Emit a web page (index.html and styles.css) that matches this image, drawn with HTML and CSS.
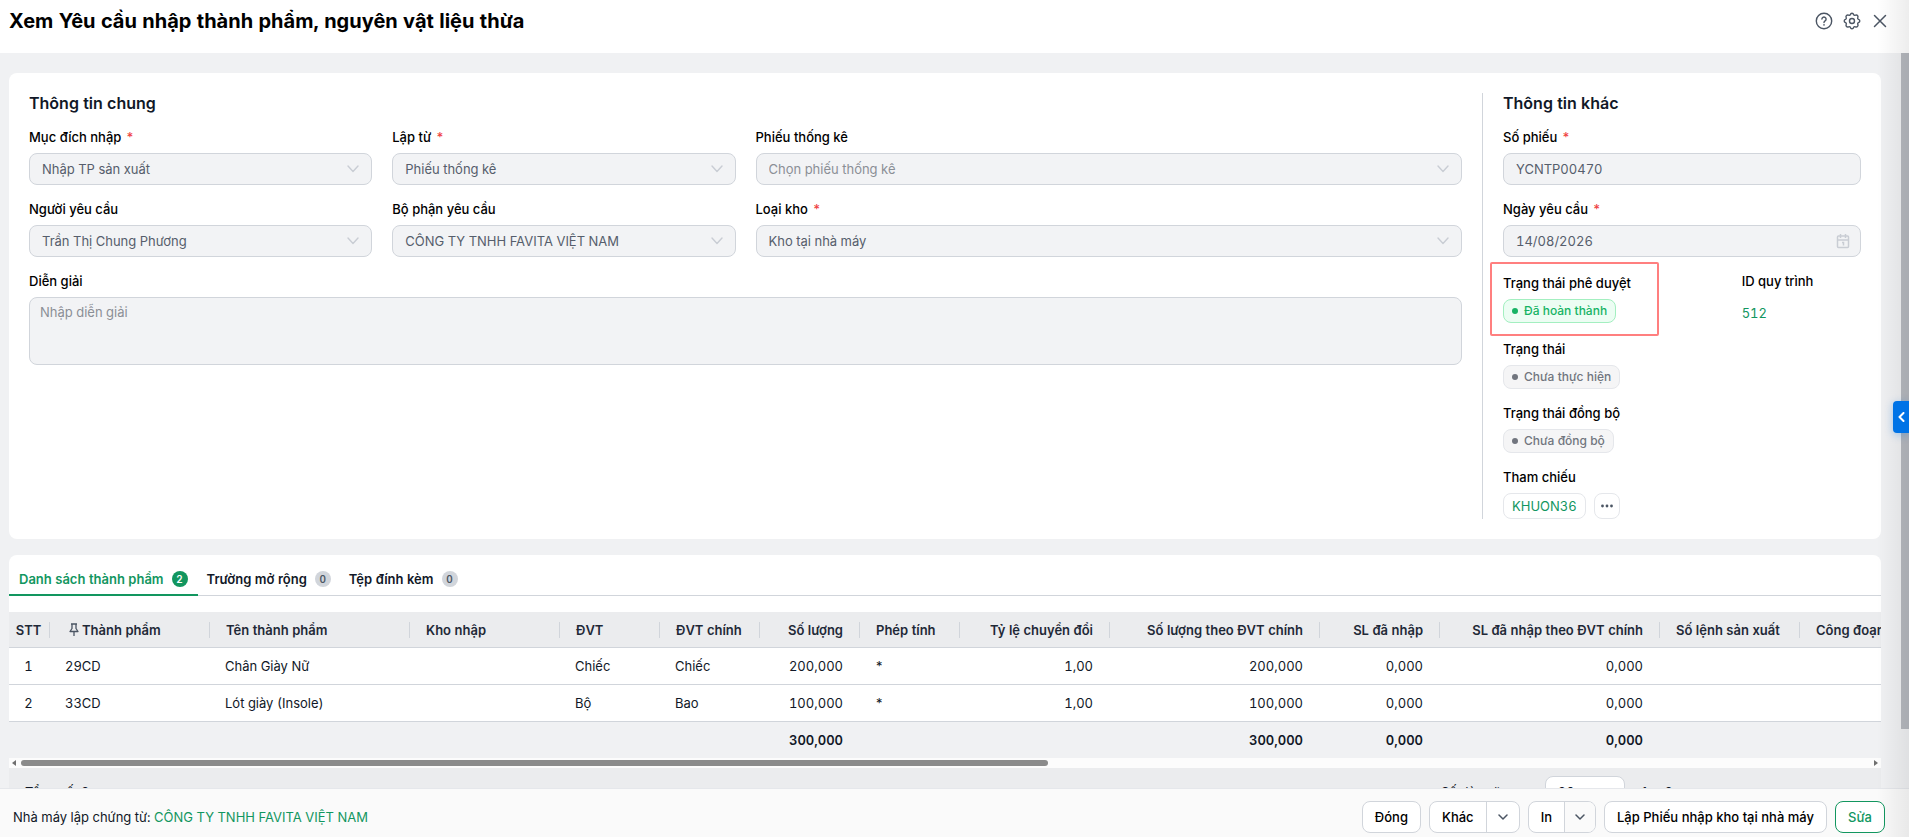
FILE: index.html
```html
<!DOCTYPE html>
<html lang="vi">
<head>
  <meta charset="UTF-8">
  <meta name="viewport" content="width=device-width, initial-scale=1.0">
  <title>Xem Yêu cầu nhập thành phẩm, nguyên vật liệu thừa</title>
  <link rel="stylesheet" href="styles.css">
</head>
<body>
  <!-- shared icons -->
  <svg class="sprite" aria-hidden="true">
    <symbol id="chevron" viewBox="0 0 12 8">
      <path d="M1 1l5 5.5L11 1" fill="none" stroke="currentColor" stroke-width="1.4" stroke-linecap="round" stroke-linejoin="round"/>
    </symbol>
    <symbol id="caret" viewBox="0 0 10 7">
      <path d="M1 1l4 4 4-4" fill="none" stroke="currentColor" stroke-width="1.5" stroke-linecap="round" stroke-linejoin="round"/>
    </symbol>
  </svg>

  <header class="header">
    <h1>Xem Yêu cầu nhập thành phẩm, nguyên vật liệu thừa</h1>
    <div class="header-actions">
      <button class="icon-btn" type="button" aria-label="Trợ giúp">
        <svg width="18" height="18" viewBox="0 0 18 18" fill="none" stroke="currentColor" stroke-width="1.4" stroke-linecap="round">
          <circle cx="9" cy="9" r="7.7"/>
          <path d="M6.9 7.1a2.1 2.1 0 1 1 3.2 1.8c-.8.5-1.1.8-1.1 1.6"/>
          <path d="M9 12.9v.1" stroke-width="1.6"/>
        </svg>
      </button>
      <button class="icon-btn" type="button" aria-label="Thiết lập">
        <svg width="18" height="18" viewBox="0 0 18 18" fill="none" stroke="currentColor" stroke-width="1.4" stroke-linejoin="round">
          <circle cx="9" cy="9" r="2.5"/>
          <path d="M7.4 2.6Q7.7 1.2 9 1.2T10.6 2.6Q11.2 3.7 12.4 3.2Q13.7 2.6 14.5 3.5T14.8 5.6Q14.3 6.8 15.4 7.4Q16.8 7.7 16.8 9T15.4 10.6Q14.3 11.2 14.8 12.4Q15.4 13.7 14.5 14.5T12.4 14.8Q11.2 14.3 10.6 15.4Q10.3 16.8 9 16.8T7.4 15.4Q6.8 14.3 5.6 14.8Q4.3 15.4 3.5 14.5T3.2 12.4Q3.7 11.2 2.6 10.6Q1.2 10.3 1.2 9T2.6 7.4Q3.7 6.8 3.2 5.6Q2.6 4.3 3.5 3.5T5.6 3.2Q6.8 3.7 7.4 2.6Z"/>
        </svg>
      </button>
      <button class="icon-btn" type="button" aria-label="Thoát">
        <svg width="18" height="18" viewBox="0 0 18 18" fill="none" stroke="currentColor" stroke-width="1.5" stroke-linecap="round">
          <path d="M3.5 3.5l11 11M14.5 3.5l-11 11"/>
        </svg>
      </button>
    </div>
  </header>

  <div class="content">
    <main class="main">
      <form class="card info">
        <section class="info-main">
          <h2>Thông tin chung</h2>
          <div class="fields">
            <div class="field">
              <label for="purpose">Mục đích nhập <span class="req">*</span></label>
              <div class="control">
                <select id="purpose" disabled><option>Nhập TP sản xuất</option></select>
                <svg class="arrow"><use href="#chevron"/></svg>
              </div>
            </div>
            <div class="field">
              <label for="source">Lập từ <span class="req">*</span></label>
              <div class="control">
                <select id="source" disabled><option>Phiếu thống kê</option></select>
                <svg class="arrow"><use href="#chevron"/></svg>
              </div>
            </div>
            <div class="field wide">
              <label for="sheet">Phiếu thống kê</label>
              <div class="control">
                <select id="sheet" class="empty" disabled><option>Chọn phiếu thống kê</option></select>
                <svg class="arrow"><use href="#chevron"/></svg>
              </div>
            </div>
            <div class="field">
              <label for="requester">Người yêu cầu</label>
              <div class="control">
                <select id="requester" disabled><option>Trần Thị Chung Phương</option></select>
                <svg class="arrow"><use href="#chevron"/></svg>
              </div>
            </div>
            <div class="field">
              <label for="department">Bộ phận yêu cầu</label>
              <div class="control">
                <select id="department" disabled><option>CÔNG TY TNHH FAVITA VIỆT NAM</option></select>
                <svg class="arrow"><use href="#chevron"/></svg>
              </div>
            </div>
            <div class="field wide">
              <label for="stock">Loại kho <span class="req">*</span></label>
              <div class="control">
                <select id="stock" disabled><option>Kho tại nhà máy</option></select>
                <svg class="arrow"><use href="#chevron"/></svg>
              </div>
            </div>
            <div class="field full">
              <label for="note">Diễn giải</label>
              <textarea id="note" placeholder="Nhập diễn giải" disabled></textarea>
            </div>
          </div>
        </section>

        <section class="info-side">
          <h2>Thông tin khác</h2>
          <div class="fields">
            <div class="field full">
              <label for="code">Số phiếu <span class="req">*</span></label>
              <input id="code" type="text" value="YCNTP00470" disabled>
            </div>
            <div class="field full">
              <label for="date">Ngày yêu cầu <span class="req">*</span></label>
              <div class="control">
                <input id="date" type="text" value="14/08/2026" disabled>
                <svg class="calendar" viewBox="0 0 14 16" fill="none" stroke="currentColor" stroke-width="1.5">
                  <rect x="1.5" y="3" width="11" height="11.5" rx="1"/>
                  <path d="M1.5 7h11M4.5 1v4M9.5 1v4M6 9.5h1.5v3"/>
                </svg>
              </div>
            </div>
          </div>
          <div class="status-row">
            <div class="status marked">
              <span class="label">Trạng thái phê duyệt</span>
              <span class="badge done">Đã hoàn thành</span>
            </div>
            <div class="process">
              <span class="label">ID quy trình</span>
              <a href="#">512</a>
            </div>
          </div>
          <div class="status">
            <span class="label">Trạng thái</span>
            <span class="badge">Chưa thực hiện</span>
          </div>
          <div class="status">
            <span class="label">Trạng thái đồng bộ</span>
            <span class="badge">Chưa đồng bộ</span>
          </div>
          <div class="status">
            <span class="label">Tham chiếu</span>
            <div class="refs">
              <a class="ref" href="#">KHUON36</a>
              <button class="ref more" type="button" aria-label="Chọn tham chiếu">
                <svg width="12" height="4" viewBox="0 0 12 4" fill="currentColor"><circle cx="1.5" cy="2" r="1.4"/><circle cx="6" cy="2" r="1.4"/><circle cx="10.5" cy="2" r="1.4"/></svg>
              </button>
            </div>
          </div>
        </section>
      </form>

      <section class="card list">
        <nav class="tabs">
          <button class="tab active" type="button">Danh sách thành phẩm <span class="count">2</span></button>
          <button class="tab" type="button">Trường mở rộng <span class="count">0</span></button>
          <button class="tab" type="button">Tệp đính kèm <span class="count">0</span></button>
        </nav>

        <div class="grid-wrap">
          <table class="grid">
            <colgroup>
              <col class="w40"><col class="w160"><col class="w200"><col class="w150"><col class="w100"><col class="w100"><col class="w100"><col class="w100"><col class="w150"><col class="w210"><col class="w120"><col class="w220"><col class="w140"><col class="w160">
            </colgroup>
            <thead>
              <tr>
                <th class="idx">STT</th>
                <th>
                  <svg class="pin" viewBox="0 0 10 14" fill="none" stroke="currentColor" stroke-width="1.3" stroke-linejoin="round"><path d="M2 1h6M3 1v4.5L1 8.5h8L7 5.5V1M5 8.5V13"/></svg>Thành phẩm
                </th>
                <th>Tên thành phẩm</th>
                <th>Kho nhập</th>
                <th>ĐVT</th>
                <th>ĐVT chính</th>
                <th class="num">Số lượng</th>
                <th>Phép tính</th>
                <th class="num">Tỷ lệ chuyển đổi</th>
                <th class="num">Số lượng theo ĐVT chính</th>
                <th class="num">SL đã nhập</th>
                <th class="num">SL đã nhập theo ĐVT chính</th>
                <th>Số lệnh sản xuất</th>
                <th>Công đoạn</th>
              </tr>
            </thead>
            <tbody>
              <tr>
                <td class="idx">1</td><td>29CD</td><td>Chân Giày Nữ</td><td></td><td>Chiếc</td><td>Chiếc</td>
                <td class="num">200,000</td><td>*</td><td class="num">1,00</td><td class="num">200,000</td>
                <td class="num">0,000</td><td class="num">0,000</td><td></td><td></td>
              </tr>
              <tr>
                <td class="idx">2</td><td>33CD</td><td>Lót giày (Insole)</td><td></td><td>Bộ</td><td>Bao</td>
                <td class="num">100,000</td><td>*</td><td class="num">1,00</td><td class="num">100,000</td>
                <td class="num">0,000</td><td class="num">0,000</td><td></td><td></td>
              </tr>
            </tbody>
            <tfoot>
              <tr>
                <td></td><td></td><td></td><td></td><td></td><td></td>
                <td class="num">300,000</td><td></td><td></td><td class="num">300,000</td>
                <td class="num">0,000</td><td class="num">0,000</td><td></td><td></td>
              </tr>
            </tfoot>
          </table>
        </div>
        <div class="hscroll">
          <svg width="4" height="6" viewBox="0 0 4 6"><path d="M4 0v6L0 3z" fill="currentColor"/></svg>
          <div class="hscroll-track"><div class="hscroll-thumb"></div></div>
          <svg width="4" height="6" viewBox="0 0 4 6"><path d="M0 0v6l4-3z" fill="currentColor"/></svg>
        </div>
        <div class="pager">
          <span>Tổng số: 2</span>
          <div class="pager-right">
            <label for="size">Số dòng/trang</label>
            <select id="size"><option>20</option></select>
            <span>1 - 2</span>
          </div>
        </div>
      </section>
    </main>
    <div class="vscroll"><div class="vscroll-thumb"></div></div>
  </div>

  <footer class="footer">
    <p>Nhà máy lập chứng từ: <a href="#">CÔNG TY TNHH FAVITA VIỆT NAM</a></p>
    <div class="footer-actions">
      <button class="btn" type="button">Đóng</button>
      <div class="split">
        <button type="button">Khác</button>
        <button class="drop" type="button" aria-label="Thêm lựa chọn"><svg width="10" height="7"><use href="#caret"/></svg></button>
      </div>
      <div class="split print">
        <button type="button">In</button>
        <button class="drop" type="button" aria-label="Chọn mẫu in"><svg width="10" height="7"><use href="#caret"/></svg></button>
      </div>
      <button class="btn" type="button">Lập Phiếu nhập kho tại nhà máy</button>
      <button class="btn primary" type="button">Sửa</button>
    </div>
  </footer>

  <div class="edge-shadow"></div>
  <button class="side-toggle" type="button" aria-label="Mở rộng">
    <svg width="7" height="10" viewBox="0 0 7 10"><path d="M5.5 1L1.5 5l4 4" fill="none" stroke="currentColor" stroke-width="2" stroke-linecap="round" stroke-linejoin="round"/></svg>
  </button>
</body>
</html>
```
FILE: styles.css
```css
*,
*::before,
*::after {
  box-sizing: border-box;
}

body {
  display: flex;
  flex-direction: column;
  height: 100vh;
  margin: 0;
  overflow: hidden;
  position: relative;
  background: #f0f1f3;
  color: #111827;
  font-family: Inter, "Noto Sans", sans-serif;
  font-size: 13px;
  font-variant-numeric: tabular-nums;
  line-height: 20px;
}

button,
input,
select,
textarea {
  font: inherit;
  font-variant-numeric: tabular-nums;
  color: inherit;
}

button {
  cursor: pointer;
}

a {
  color: #12965f;
  text-decoration: none;
}

.sprite {
  position: absolute;
  width: 0;
  height: 0;
}

/* header */
.header {
  display: flex;
  justify-content: space-between;
  align-items: flex-start;
  height: 53px;
  padding: 9px 20px 0 9px;
  background: #fff;
}

h1 {
  margin: 0;
  color: #000;
  font-size: 20px;
  font-weight: 700;
  line-height: 24px;
}

.header-actions {
  display: flex;
  gap: 10px;
  padding-top: 3px;
}

.icon-btn {
  display: flex;
  padding: 0;
  border: 0;
  background: none;
  color: #4b5563;
}

/* scroll area */
.content {
  display: flex;
  flex: 1;
  min-height: 0;
  overflow: hidden;
}

.main {
  flex: 1;
  min-width: 0;
  padding: 20px 20px 0 9px;
}

.card {
  border-radius: 8px;
  background: #fff;
}

.info {
  display: flex;
  padding: 20px;
}

.info-main {
  flex: 1;
  padding-right: 20px;
}

.info-side {
  width: 379px;
  padding-left: 20px;
  border-left: 1px solid #d1d5db;
}

h2 {
  margin: 0 0 12px;
  font-size: 16px;
  font-weight: 600;
  line-height: 20px;
}

.fields {
  display: grid;
  grid-template-columns: repeat(4, 1fr);
  gap: 12px 20px;
}

.wide {
  grid-column: span 2;
}

.full {
  grid-column: 1 / -1;
}

.field label,
.label {
  display: block;
  margin-bottom: 4px;
  color: #000;
  font-weight: 500;
  line-height: 24px;
}

.req {
  margin-left: 1px;
  color: #ef4444;
}

.control {
  position: relative;
}

.field select,
.field input,
.field textarea {
  display: block;
  width: 100%;
  height: 32px;
  padding: 0 12px;
  border: 1px solid #d1d5db;
  border-radius: 8px;
  background: #f2f3f5;
  color: #565e6c;
  opacity: 1;
  appearance: none;
}

.field textarea {
  height: 68px;
  padding: 4px 10px;
  resize: none;
}

.field textarea::placeholder,
.field select.empty {
  color: #8b8f96;
}

.arrow {
  position: absolute;
  top: 12px;
  right: 13px;
  width: 12px;
  height: 8px;
  color: #c9cdd4;
}

.calendar {
  position: absolute;
  top: 8px;
  right: 11px;
  width: 14px;
  height: 16px;
  color: #c9cdd4;
}

/* statuses */
.status-row {
  display: grid;
  grid-template-columns: 2fr 1fr;
  margin-top: 12px;
}

.status {
  margin-top: 12px;
}

.status-row .status {
  position: relative;
  height: 54px;
  margin-top: 2px;
}

/* frame that calls out the approval status */
.marked::after {
  content: "";
  position: absolute;
  top: -9px;
  left: -13px;
  width: 169px;
  height: 74px;
  border: 2px solid #ff7f7f;
  border-radius: 2px;
}

.process .label {
  margin-bottom: 8px;
}

.process a {
  display: block;
  line-height: 24px;
}

.badge {
  display: inline-flex;
  align-items: center;
  gap: 6px;
  height: 24px;
  padding: 0 8px;
  border: 1px solid #e5e7eb;
  border-radius: 8px;
  background: #f5f5f6;
  color: #71757e;
  font-size: 12px;
  font-weight: 500;
  vertical-align: top;
}

.badge::before {
  content: "";
  width: 6px;
  height: 6px;
  border-radius: 50%;
  background: currentColor;
}

.badge.done {
  border-color: #a3efc0;
  background: #ecfdf3;
  color: #16b364;
}

.refs {
  display: flex;
  gap: 8px;
}

.ref {
  display: flex;
  align-items: center;
  justify-content: center;
  height: 26px;
  padding: 0 8px;
  border: 1px solid #e5e7eb;
  border-radius: 8px;
  background: #fff;
}

.more {
  width: 26px;
  padding: 0;
  color: #4b5563;
}

/* list card */
.list {
  margin-top: 16px;
  overflow: hidden;
}

.tabs {
  display: flex;
  height: 41px;
  margin-bottom: 16px;
  border-bottom: 1px solid #d1d5db;
}

.tab {
  display: flex;
  align-items: center;
  gap: 8px;
  height: 41px;
  padding: 8px 9px 0;
  border: 0;
  border-bottom: 2px solid transparent;
  background: none;
  font-weight: 600;
}

.tab.active {
  padding: 8px 10px 0;
  border-color: #12965f;
  color: #12965f;
}

.count {
  width: 16px;
  height: 16px;
  border-radius: 50%;
  background: #d1d5db;
  color: #4b5563;
  font-size: 10px;
  line-height: 16px;
  text-align: center;
}

.active .count {
  background: #12965f;
  color: #fff;
}

.grid-wrap {
  overflow: hidden;
}

.grid {
  width: 100%;
  min-width: 1951px;
  table-layout: fixed;
  border-collapse: separate;
  border-spacing: 0;
}

.w40 { width: 41px; }
.w100 { width: 100px; }
.w120 { width: 120px; }
.w140 { width: 140px; }
.w150 { width: 150px; }
.w160 { width: 160px; }
.w200 { width: 200px; }
.w210 { width: 210px; }
.w220 { width: 220px; }

.grid th,
.grid td {
  height: 37px;
  padding: 0 17px 0 15px;
  border-bottom: 1px solid #d1d5db;
  text-align: left;
  white-space: nowrap;
}

.grid th {
  height: 36px;
  padding-left: 16px;
  background:
    linear-gradient(#d1d5db, #d1d5db) right center / 1px 16px no-repeat,
    #ebecee;
  color: #1f2937;
  font-weight: 600;
}

.grid .num {
  text-align: right;
}

.grid .idx {
  padding: 0 2px 0 0;
  text-align: center;
}

.grid tfoot td {
  height: 36px;
  background: #f0f1f3;
  border-bottom: 0;
  font-weight: 600;
}

.pin {
  width: 10px;
  height: 14px;
  margin: 0 3px;
  color: #4b5563;
  vertical-align: -2px;
}

.hscroll {
  display: flex;
  align-items: center;
  gap: 5px;
  height: 10px;
  padding: 0 3px;
  background: #fcfcfc;
  color: #6f6f6f;
}

.hscroll-track {
  flex: 1;
}

.hscroll-thumb {
  width: calc(100% * 5 / 9);
  height: 6px;
  border-radius: 3px;
  background: #8b8b8b;
}

.pager {
  display: flex;
  align-items: center;
  justify-content: space-between;
  height: 48px;
  padding: 0 208px 0 16px;
  background: #ebecee;
}

.pager-right {
  display: flex;
  align-items: center;
  gap: 16px;
}

.pager select {
  width: 80px;
  height: 32px;
  padding: 0 12px;
  border: 1px solid #d1d5db;
  border-radius: 8px;
  background: #fff;
  appearance: none;
}

.vscroll {
  width: 8px;
}

.vscroll-thumb {
  height: 92%;
  background: #b6b9bf;
}

/* footer */
.footer {
  display: flex;
  justify-content: space-between;
  align-items: center;
  height: 49px;
  padding: 8px 24px 0 13px;
  border-top: 1px solid #e5e7eb;
  background: #fafafa;
}

.footer p {
  margin: 0;
}

.footer-actions {
  display: flex;
  gap: 8px;
}

.btn,
.split {
  height: 32px;
  border: 1px solid #d1d5db;
  border-radius: 8px;
  background: #fff;
  color: #000;
  font-weight: 500;
}

.btn {
  padding: 0 12px;
}

.btn.primary {
  border-color: #12965f;
  color: #12965f;
}

.split {
  display: flex;
  overflow: hidden;
}

.split button {
  padding: 0 12px;
  border: 0;
  background: none;
}

.split .drop {
  display: flex;
  align-items: center;
  padding: 0 11px;
  border-left: 1px solid #d1d5db;
  color: #4b5563;
}

.print .drop {
  padding: 0 10px;
  background: #fafafa;
}

/* things that lie over the page edge */
.edge-shadow {
  position: absolute;
  top: 0;
  right: 0;
  bottom: 0;
  width: 32px;
  background: linear-gradient(to right, rgba(0, 0, 0, 0), rgba(0, 0, 0, 0.07));
  pointer-events: none;
}

.side-toggle {
  display: flex;
  align-items: center;
  justify-content: center;
  position: absolute;
  top: 401px;
  right: 0;
  width: 16px;
  height: 32px;
  padding: 0;
  border: 0;
  border-radius: 4px 0 0 4px;
  background: #0073e6;
  box-shadow: 0 2px 8px rgba(0, 115, 230, 0.3);
  color: #fff;
}
```
